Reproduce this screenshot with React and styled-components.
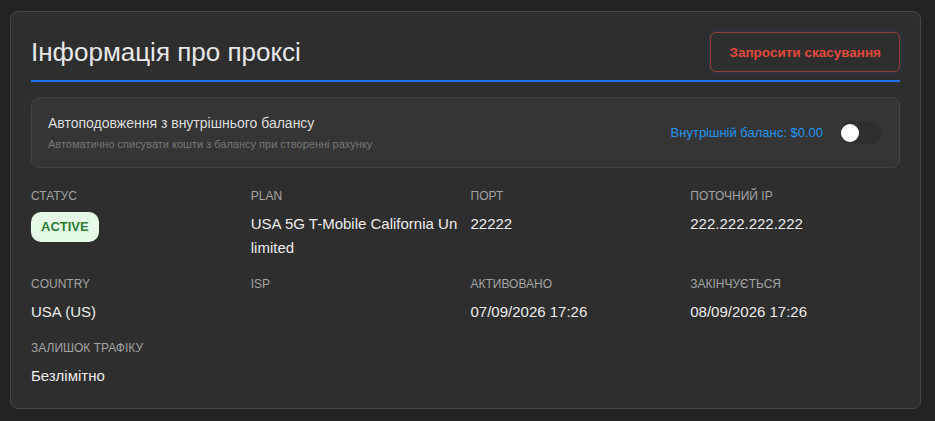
import React from "react";
import styled, { createGlobalStyle } from "styled-components";

const Global = createGlobalStyle`
  html, body { margin: 0; padding: 0; background: #232323; }
  body { font-family: "Liberation Sans", Arial, sans-serif; }
  * { box-sizing: border-box; }
`;

const Page = styled.div`
  padding: 11px 14px 12px 10px;
`;

const Card = styled.section`
  background: #2e2e2e;
  border: 1px solid #454545;
  border-radius: 8px;
  padding: 20px 20px 20px 20px;
`;

const Header = styled.div`
  display: flex;
  justify-content: space-between;
  align-items: center;
  padding-bottom: 8px;
  border-bottom: 2px solid #1f6fee;
`;

const Title = styled.h1`
  margin: 0;
  font-size: 26px;
  font-weight: 400;
  color: #e8e8e8;
  line-height: 32px;
`;

const CancelButton = styled.button`
  height: 40px;
  padding: 0 18px;
  background: transparent;
  border: 1px solid rgba(214, 70, 60, 0.6);
  border-radius: 6px;
  color: #e2483d;
  font-family: inherit;
  font-size: 13.5px;
  font-weight: 700;
  box-shadow: 0 0 6px rgba(60, 90, 160, 0.25);
  cursor: pointer;
`;

const AutoBox = styled.div`
  margin-top: 15px;
  display: flex;
  align-items: center;
  justify-content: space-between;
  background: #353535;
  border: 1px solid #424242;
  border-radius: 8px;
  padding: 16px 17px 16px 16px;
`;

const AutoText = styled.div`
  display: flex;
  flex-direction: column;
  gap: 5px;
`;

const AutoTitle = styled.div`
  font-size: 14px;
  line-height: 18px;
  color: #dedede;
`;

const AutoSub = styled.div`
  font-size: 11px;
  line-height: 14px;
  color: #767676;
`;

const AutoRight = styled.div`
  display: flex;
  align-items: center;
  gap: 18px;
`;

const Balance = styled.span`
  font-size: 13px;
  color: #2196f3;
`;

const Track = styled.div`
  position: relative;
  width: 41px;
  height: 23px;
  border-radius: 12px;
  background: #2f2f2f;
`;

const Knob = styled.div`
  position: absolute;
  top: 3px;
  left: 0;
  width: 18px;
  height: 18px;
  border-radius: 50%;
  background: #ffffff;
`;

const Grid = styled.div`
  margin-top: 20px;
  display: grid;
  grid-template-columns: repeat(4, 1fr);
  column-gap: 10px;
  row-gap: 16px;
`;

const Field = styled.div`
  display: flex;
  flex-direction: column;
  align-items: flex-start;
  gap: 8px;
  min-width: 0;
`;

const Label = styled.div`
  font-size: 12px;
  line-height: 16px;
  color: #a3a3a3;
  text-transform: uppercase;
`;

const Value = styled.div`
  font-size: 15px;
  line-height: 24px;
  color: #ececec;
  word-break: break-all;
  width: 100%;
`;

const Badge = styled.span`
  display: inline-block;
  padding: 0 10px;
  height: 30px;
  line-height: 30px;
  border-radius: 10px;
  background: #e6f8e6;
  color: #2e7d32;
  font-size: 13px;
  font-weight: 700;
`;

const fields = [
  { label: "Статус", badge: "ACTIVE" },
  { label: "Plan", value: "USA 5G T-Mobile California Unlimited" },
  { label: "Порт", value: "22222" },
  { label: "Поточний IP", value: "222.222.222.222" },
  { label: "Country", value: "USA (US)" },
  { label: "ISP", value: "" },
  { label: "Активовано", value: "07/09/2026 17:26" },
  { label: "Закінчується", value: "08/09/2026 17:26" },
  { label: "Залишок трафіку", value: "Безлімітно" },
];

export default function App() {
  return (
    <>
      <Global />
      <Page>
        <Card>
          <Header>
            <Title>Інформація про проксі</Title>
            <CancelButton>Запросити скасування</CancelButton>
          </Header>
          <AutoBox>
            <AutoText>
              <AutoTitle>Автоподовження з внутрішнього балансу</AutoTitle>
              <AutoSub>Автоматично списувати кошти з балансу при створенні рахунку</AutoSub>
            </AutoText>
            <AutoRight>
              <Balance>Внутрішній баланс: $0.00</Balance>
              <Track>
                <Knob />
              </Track>
            </AutoRight>
          </AutoBox>
          <Grid>
            {fields.map((f) => (
              <Field key={f.label}>
                <Label>{f.label}</Label>
                {f.badge ? <Badge>{f.badge}</Badge> : <Value>{f.value}</Value>}
              </Field>
            ))}
          </Grid>
        </Card>
      </Page>
    </>
  );
}
